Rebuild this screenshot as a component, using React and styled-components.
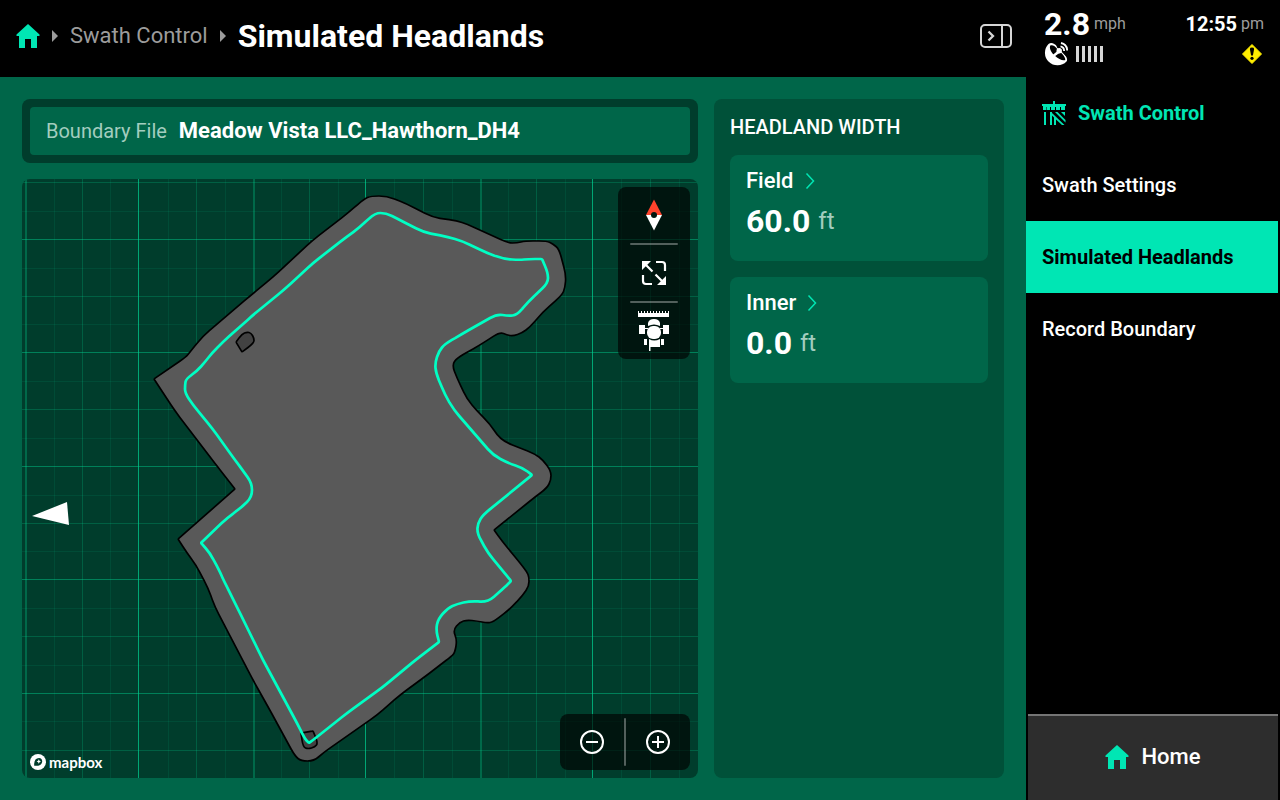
import React from "react";
import styled, { createGlobalStyle, ThemeProvider } from "styled-components";

const theme = {
  accent: "#00e6b4",
  green: "#006649",
  panel: "#005139",
  deep: "#003d2c",
  muted: "#9c9c9c",
  mint: "#a3cdbf",
};

const GlobalStyle = createGlobalStyle`
  *, *::before, *::after { box-sizing: border-box; }
  body { margin: 0; background: #000; color: #fff; font-family: Roboto, "Liberation Sans", sans-serif; }
  button { font: inherit; color: inherit; border: 0; padding: 0; background: none; cursor: pointer; text-align: left; }
  a { color: inherit; text-decoration: none; }
  h1, h2, p { margin: 0; font: inherit; }
  svg { display: block; flex: none; }
`;

const Screen = styled.div`
  display: flex;
  min-height: 100vh;
`;

const Main = styled.main`
  flex: 1;
  min-width: 0;
  display: flex;
  flex-direction: column;
  background: ${(p) => p.theme.green};
`;

const Header = styled.header`
  display: flex;
  align-items: center;
  justify-content: space-between;
  height: 77px;
  padding: 0 14px 6px 16px;
  background: #000;
`;

const Breadcrumbs = styled.nav`
  display: flex;
  align-items: center;
  gap: 12px;
  white-space: nowrap;
`;

const Crumb = styled.a`
  font-size: 22px;
  line-height: 28px;
  color: ${(p) => p.theme.muted};
`;

const PageTitle = styled.h1`
  font-size: 32px;
  line-height: 38px;
  font-weight: 700;
`;

const Content = styled.div`
  flex: 1;
  display: grid;
  grid-template-columns: minmax(0, 1fr) 290px;
  gap: 16px;
  padding: 22px;
`;

const MapColumn = styled.div`
  display: flex;
  flex-direction: column;
  gap: 16px;
`;

const FileFrame = styled.div`
  padding: 8px;
  border-radius: 8px;
  background: ${(p) => p.theme.deep};
`;

const FileButton = styled.button`
  display: flex;
  align-items: center;
  gap: 12px;
  width: 100%;
  height: 48px;
  padding: 0 16px;
  border-radius: 4px;
  background: ${(p) => p.theme.green};
  font-size: 20px;
  line-height: 24px;
`;

const FileLabel = styled.span`
  color: ${(p) => p.theme.mint};
`;

const FileName = styled.span`
  font-size: 22px;
  font-weight: 700;
`;

const MapPanel = styled.section`
  position: relative;
  flex: 1;
  min-height: 400px;
  border-radius: 8px;
  overflow: hidden;
  background: ${(p) => p.theme.deep};
`;

const MapDrawing = styled.svg`
  position: absolute;
  inset: 0;
  width: 100%;
  height: 100%;
`;

const MapTools = styled.div`
  position: absolute;
  right: 8px;
  ${(p) => (p.$row ? "bottom: 8px;" : "top: 8px;")}
  display: flex;
  flex-direction: ${(p) => (p.$row ? "row" : "column")};
  align-items: center;
  border-radius: 8px;
  background: rgba(0, 0, 0, 0.65);
`;

const ToolButton = styled.button`
  display: flex;
  align-items: center;
  justify-content: center;
  width: ${(p) => (p.$wide ? "72px" : "64px")};
  height: 56px;
`;

const ToolDivider = styled.span`
  border-radius: 1px;
  background: rgba(255, 255, 255, 0.32);
  ${(p) => (p.$upright ? "width: 2px; height: 48px;" : "width: 48px; height: 2px;")}
`;

const Attribution = styled.a`
  position: absolute;
  left: 8px;
  bottom: 7px;
  display: flex;
  align-items: center;
  gap: 3px;
  font-family: Lato, sans-serif;
  font-size: 15px;
  line-height: 18px;
  font-weight: 700;
`;

const WidthPanel = styled.section`
  display: flex;
  flex-direction: column;
  gap: 16px;
  padding: 16px;
  border-radius: 8px;
  background: ${(p) => p.theme.panel};
`;

const PanelTitle = styled.h2`
  font-size: 20px;
  line-height: 24px;
  font-weight: 500;
`;

const WidthCard = styled.button`
  height: 106px;
  padding: 12px 16px;
  border-radius: 8px;
  background: ${(p) => p.theme.green};
  display: flex;
  flex-direction: column;
  gap: 6px;
`;

const CardLabel = styled.span`
  display: flex;
  align-items: center;
  gap: 11px;
  font-size: 22px;
  line-height: 28px;
  font-weight: 500;
`;

const CardValue = styled.span`
  display: flex;
  align-items: center;
  gap: 8px;
  font-size: 32px;
  line-height: 40px;
  font-weight: 700;
`;

const CardUnit = styled.span`
  font-size: 24px;
  font-weight: 400;
  color: ${(p) => p.theme.mint};
`;

const Sidebar = styled.aside`
  flex: 0 0 254px;
  display: flex;
  flex-direction: column;
  padding-right: 2px;
  background: #000;
`;

const Status = styled.div`
  height: 77px;
  padding: 6px 14px 0 18px;
`;

const StatusRow = styled.div`
  display: flex;
  align-items: center;
  justify-content: space-between;
  padding-right: ${(p) => (p.$inset ? "2px" : "0")};
`;

const Reading = styled.p`
  display: flex;
  align-items: center;
  gap: 4px;
  font-size: ${(p) => (p.$large ? "32px" : "20px")};
  line-height: 36px;
  font-weight: 700;
`;

const Unit = styled.span`
  font-size: 16px;
  font-weight: 400;
  color: ${(p) => p.theme.muted};
`;

const Signal = styled.div`
  display: flex;
  align-items: center;
  gap: 8px;
`;

const Bars = styled.span`
  display: flex;
  gap: 3px;
`;

const Bar = styled.span`
  width: 3px;
  height: 16px;
  background: #d6d6d6;
`;

const Menu = styled.nav`
  flex: 1;
  display: flex;
  flex-direction: column;
`;

const MenuItem = styled.a`
  display: flex;
  align-items: center;
  gap: 12px;
  height: 72px;
  padding: 0 16px;
  font-size: 20px;
  line-height: 24px;
  font-weight: ${(p) => (p.$active || p.$heading ? 700 : 500)};
  color: ${(p) => (p.$active ? "#000" : p.$heading ? p.theme.accent : "#fff")};
  background: ${(p) => (p.$active ? p.theme.accent : "transparent")};
`;

const HomeButton = styled.button`
  display: flex;
  align-items: center;
  justify-content: center;
  gap: 12px;
  height: 86px;
  margin-left: 2px;
  padding-bottom: 2px;
  border-top: 2px solid #757575;
  background: #2d2d2d;
  font-size: 22px;
  line-height: 28px;
  font-weight: 500;
`;

const HomeIcon = () => (
  <svg width="24" height="26" viewBox="0 0 24 26" fill={theme.accent} aria-hidden="true">
    <path d="M12 1 0.500 11.500V13H3v12h6v-9h6v9h6V13h2.500v-1.500z" />
  </svg>
);

const CrumbArrow = () => (
  <svg width="6" height="12" viewBox="0 0 6 12" fill={theme.muted} aria-hidden="true">
    <path d="M0 0 6 6 0 12z" />
  </svg>
);

const CollapseIcon = () => (
  <svg width="32" height="24" viewBox="0 0 32 24" fill="none" stroke="#d6d6d6" strokeWidth="2" aria-hidden="true">
    <rect x="1" y="1" width="30" height="22" rx="4" />
    <path d="M22 1v22" />
    <path d="M8.500 7.500 13 12 8.500 16.500" strokeWidth="2.300" />
  </svg>
);

const Chevron = () => (
  <svg width="10" height="16" viewBox="0 0 10 16" fill="none" stroke={theme.accent} strokeWidth="1.500" aria-hidden="true">
    <path d="M1.500 0.500 8.500 8 1.500 15.500" />
  </svg>
);

const SatelliteIcon = () => (
  <svg width="24" height="24" viewBox="0 0 24 24" aria-hidden="true">
    <path d="M4.500 2C7 0 10 1 13.500 4.500L20 12C22.500 14.500 24 17.500 22.500 19.500A12 12 0 1 1 4.500 2z" fill="#fff" />
    <path d="M6.300 3.500C8.500 2.500 11.500 4.500 13 6.800L14.600 8.700 9.800 12.800C7 9.800 5 6 6.300 3.500z" fill="#000" />
    <path d="M11.200 14 16.500 10.300C19 12.700 21.500 15.500 21.300 18 18.500 19 14.500 17 11.200 14z" fill="#000" />
    <path d="M12 2h12v14l-5.500-5.500L13 5.500z" fill="#000" />
    <path d="M9.500 13.500 15 9" stroke="#fff" strokeWidth="1.800" />
    <circle cx="15.200" cy="8.700" r="2.700" fill="#fff" />
    <path d="M16.500 4.300a4.600 4.600 0 0 1 3.600 4.700M17 1a8 8 0 0 1 6.200 7.500" fill="none" stroke="#fff" strokeWidth="1.800" />
  </svg>
);

const WarningIcon = () => (
  <svg width="20" height="20" viewBox="0 0 20 20" aria-hidden="true">
    <path d="M10 0.500 19.500 10 10 19.500 0.500 10z" fill="#ffed00" stroke="#ffed00" strokeLinejoin="round" />
    <path d="M7.900 5a2.100 1.400 0 0 1 4.200 0l-1.200 6.500H9.100z" fill="#000" />
    <circle cx="10" cy="14.300" r="1.600" fill="#000" />
  </svg>
);

const SwathIcon = () => (
  <svg width="24" height="26" viewBox="0 0 24 26" fill={theme.accent} aria-hidden="true">
    <path d="M0 4h11V1h2v3h11v2h-1v4h-4V7h-1v3h-4V7h-1v3H9V7H8v3H4.500V7H4v3H1V6H0z" />
    <path d="M2 12h2v13H2zM8 12h2v13H8z" />
    <path d="M13 12h2.500l8 8v2.500zM10 13 22.500 25H20L14 19.500V25h-2V17.500L10 15.500zM19 12h4v4z" />
  </svg>
);

const CompassIcon = () => (
  <svg width="18" height="32" viewBox="0 0 18 32" aria-hidden="true">
    <path d="M9 0.500 17 16H1z" fill="#ff432c" />
    <path d="M1 16h16L9 31.500z" fill="#fff" />
    <circle cx="9" cy="16" r="3" fill="#001810" />
  </svg>
);

const ExpandIcon = () => (
  <svg width="26" height="26" viewBox="0 0 26 26" aria-hidden="true">
    <path d="M15 2h6a3 3 0 0 1 3 3v6M2 15v6a3 3 0 0 0 3 3h6M4 4l7.500 7.500M14.500 14.500 22 22" fill="none" stroke="#fff" strokeWidth="2.200" />
    <path d="M1 1h9L1 10zM25 25h-9l9-9z" fill="#fff" />
  </svg>
);

const TractorIcon = () => (
  <svg width="32" height="40" viewBox="0 0 32 40" fill="#fff" aria-hidden="true">
    <path d="M0 0h1v2h2V0h1v2h2V0h1v2h2V0h1v2h2V0h1v2h2V0h1v2h2V0h1v2h2V0h1v2h2V0h1v2h2V0h1v2h2V0h1v6H0z" />
    <path d="M10 15v-3q1-4 6-4t6 4v3q-6-3-12 0z" />
    <rect x="1" y="14" width="6" height="9" />
    <rect x="25" y="14" width="6" height="9" />
    <path d="M6 17h4v1H6zM22 17h4v1h-4z" />
    <rect x="9" y="15" width="14" height="13" rx="6" />
    <path d="M11 28q5 3 11 0v8H12.500v4H11z" />
    <path d="M6 28h3v6H6zM23 28h3v6h-3z" />
  </svg>
);

const ZoomIcon = ({ plus }) => (
  <svg width="24" height="24" viewBox="0 0 24 24" fill="none" stroke="#fff" strokeWidth="2" aria-hidden="true">
    <circle cx="12" cy="12" r="11" />
    <path d={plus ? "M6 12h12M12 6v12" : "M6 12h12"} />
  </svg>
);

const MapboxMark = () => (
  <svg width="16" height="16" viewBox="0 0 16 16" aria-hidden="true">
    <circle cx="8" cy="8" r="8" fill="#fff" />
    <path d="M4.200 11.800Q3.800 4 9 4a3.600 3.600 0 0 1 3.200 3.700Q11.500 12.400 4.200 11.800z" fill={theme.deep} />
    <path d="M8.800 5.300 9.500 6.800 11 7.500 9.500 8.200 8.800 9.700 8.100 8.200 6.600 7.500 8.100 6.800z" fill="#fff" />
  </svg>
);

const gridColumns = [25, 54, 82, 110, 138, 168, 196, 225, 253, 281, 309, 338, 365, 394, 423, 452, 480, 508, 536, 565, 592, 621, 650, 679];
const gridRows = [182, 211, 239, 268, 296, 324, 352, 381, 409, 438, 466, 495, 523, 551, 579, 608, 636, 665, 693, 721, 750];
const majorColumns = [138, 365, 592];
const strongColumns = [25, 253, 480];

const columnOpacity = (x, i) =>
  majorColumns.includes(x) ? 0.72 : strongColumns.includes(x) ? 0.3 : i % 2 === 0 ? 0.23 : 0.1;
const rowOpacity = (i) => (i % 4 === 2 ? 0.46 : i % 2 === 0 ? 0.24 : 0.1);

const boundary =
  "154,379 186,357 190,352 203,336 250,296 273,277 313,240 348,213 364,199 371,196 387,196 407,204 432,217 457,221 467,224 508,243 517,243 525,241 547,241 553,244 559,249 566,275 565,288 562,295 543,312 530,327 522,333 513,336 507,335 500,332 480,345 457,358 452,365 457,378 467,399 477,411 490,424 497,435 505,442 535,454 543,460 551,471 551,480 547,488 535,497 494,530 502,541 520,563 527,572 529,577 529,586 523,595 510,609 493,622 487,623 477,621 467,620 460,622 453,630 457,640 455,652 452,656 423,678 400,695 377,715 323,753 314,761 301,761 295,756 267,705 253,680 228,632 215,607 208,588 196,565 187,553 178,539 235,489 220,470 175,411";

const headland =
  "186,379 197,371 205,362 212,353 223,342 253,315 285,289 313,263 340,242 360,227 375,213 386,213 398,219 423,232 448,237 462,241 487,253 504,259 520,260 528,259 542,259 548,273 548,283 528,302 517,315 508,316 497,314 462,334 445,344 439,351 435,363 436,373 445,395 454,410 480,440 493,455 508,463 523,468 532,475 483,515 478,523 477,533 488,553 511,581 505,587 488,602 470,601 457,604 448,608 438,619 436,630 439,642 413,662 383,687 347,713 317,737 309,743 305,739 297,723 263,660 237,607 223,579 220,572 210,553 201,543 227,518 242,507 252,497 252,483 235,460 212,428 193,405 185,393 185,385";

const obstacles = [
  "236,342 242,334 247,332 251,333 254,338 254,343 242,352",
  "301,733 313,731 318,743 315,747 308,749 303,747",
];

/* Closed outline that eases gentle bends into curves and keeps sharp corners crisp. */
const smoothOutline = (list) => {
  const points = list.split(" ").map((pair) => pair.split(",").map(Number));
  const count = points.length;
  const steps = points.map(([x, y], i) => {
    const [px, py] = points[(i + count - 1) % count];
    const [nx, ny] = points[(i + 1) % count];
    const before = Math.hypot(px - x, py - y);
    const after = Math.hypot(nx - x, ny - y);
    const cosine = ((x - px) * (nx - x) + (y - py) * (ny - y)) / (before * after);
    const reach = cosine > 0.45 ? 8 : 1;
    const a = Math.min(reach, before / 2) / before;
    const b = Math.min(reach, after / 2) / after;
    const start = `${(x + (px - x) * a).toFixed(1)} ${(y + (py - y) * a).toFixed(1)}`;
    const end = `${(x + (nx - x) * b).toFixed(1)} ${(y + (ny - y) * b).toFixed(1)}`;
    return `${i === 0 ? "M" : "L"}${start}Q${x} ${y} ${end}`;
  });
  return `${steps.join("")}Z`;
};

const FieldMap = () => (
  <MapDrawing viewBox="22 179 676 599" preserveAspectRatio="xMidYMid slice" role="img" aria-label="Field boundary map">
    <g fill="#00cf90">
      {gridColumns.map((x, i) => (
        <rect key={x} x={x} y="179" width={strongColumns.includes(x) ? 2 : 1} height="599" opacity={columnOpacity(x, i)} />
      ))}
      {gridRows.map((y, i) => (
        <rect key={y} x="22" y={y} width="676" height="1" opacity={rowOpacity(i)} />
      ))}
    </g>
    <path d={smoothOutline(boundary)} fill="#595959" stroke="#000" strokeWidth="1.700" />
    <g fill="#424242" stroke="#000" strokeWidth="1.700">
      {obstacles.map((outline) => (
        <path key={outline} d={smoothOutline(outline)} />
      ))}
    </g>
    <path d={smoothOutline(headland)} fill="none" stroke="#00ffc4" strokeWidth="2.700" strokeLinejoin="round" />
    <polygon points="32,516 67,502 69,525" fill="#fff" />
  </MapDrawing>
);

const widths = [
  { label: "Field", value: "60.0" },
  { label: "Inner", value: "0.0" },
];

const menuItems = ["Swath Settings", "Simulated Headlands", "Record Boundary"];

export default function App() {
  return (
    <ThemeProvider theme={theme}>
      <GlobalStyle />
      <Screen>
        <Main>
          <Header>
            <Breadcrumbs aria-label="Breadcrumb">
              <a href="#home" aria-label="Home">
                <HomeIcon />
              </a>
              <CrumbArrow />
              <Crumb href="#swath-control">Swath Control</Crumb>
              <CrumbArrow />
              <PageTitle>Simulated Headlands</PageTitle>
            </Breadcrumbs>
            <button aria-label="Collapse side panel">
              <CollapseIcon />
            </button>
          </Header>
          <Content>
            <MapColumn>
              <FileFrame>
                <FileButton>
                  <FileLabel>Boundary File</FileLabel>
                  <FileName>Meadow Vista LLC_Hawthorn_DH4</FileName>
                </FileButton>
              </FileFrame>
              <MapPanel>
                <FieldMap />
                <MapTools>
                  <ToolButton $wide aria-label="Reset bearing">
                    <CompassIcon />
                  </ToolButton>
                  <ToolDivider />
                  <ToolButton $wide aria-label="Fit field">
                    <ExpandIcon />
                  </ToolButton>
                  <ToolDivider />
                  <ToolButton $wide aria-label="Center on vehicle">
                    <TractorIcon />
                  </ToolButton>
                </MapTools>
                <MapTools $row>
                  <ToolButton aria-label="Zoom out">
                    <ZoomIcon />
                  </ToolButton>
                  <ToolDivider $upright />
                  <ToolButton aria-label="Zoom in">
                    <ZoomIcon plus />
                  </ToolButton>
                </MapTools>
                <Attribution href="#mapbox">
                  <MapboxMark />
                  mapbox
                </Attribution>
              </MapPanel>
            </MapColumn>
            <WidthPanel>
              <PanelTitle>HEADLAND WIDTH</PanelTitle>
              {widths.map((item) => (
                <WidthCard key={item.label}>
                  <CardLabel>
                    {item.label}
                    <Chevron />
                  </CardLabel>
                  <CardValue>
                    {item.value}
                    <CardUnit>ft</CardUnit>
                  </CardValue>
                </WidthCard>
              ))}
            </WidthPanel>
          </Content>
        </Main>
        <Sidebar>
          <Status>
            <StatusRow>
              <Reading $large>
                2.8<Unit>mph</Unit>
              </Reading>
              <Reading>
                12:55<Unit>pm</Unit>
              </Reading>
            </StatusRow>
            <StatusRow $inset>
              <Signal>
                <SatelliteIcon />
                <Bars>
                  {[1, 2, 3, 4, 5].map((n) => (
                    <Bar key={n} />
                  ))}
                </Bars>
              </Signal>
              <WarningIcon />
            </StatusRow>
          </Status>
          <Menu aria-label="Swath control">
            <MenuItem $heading href="#swath-control">
              <SwathIcon />
              Swath Control
            </MenuItem>
            {menuItems.map((label) => (
              <MenuItem key={label} href="#section" $active={label === "Simulated Headlands"}>
                {label}
              </MenuItem>
            ))}
          </Menu>
          <HomeButton>
            <HomeIcon />
            Home
          </HomeButton>
        </Sidebar>
      </Screen>
    </ThemeProvider>
  );
}
